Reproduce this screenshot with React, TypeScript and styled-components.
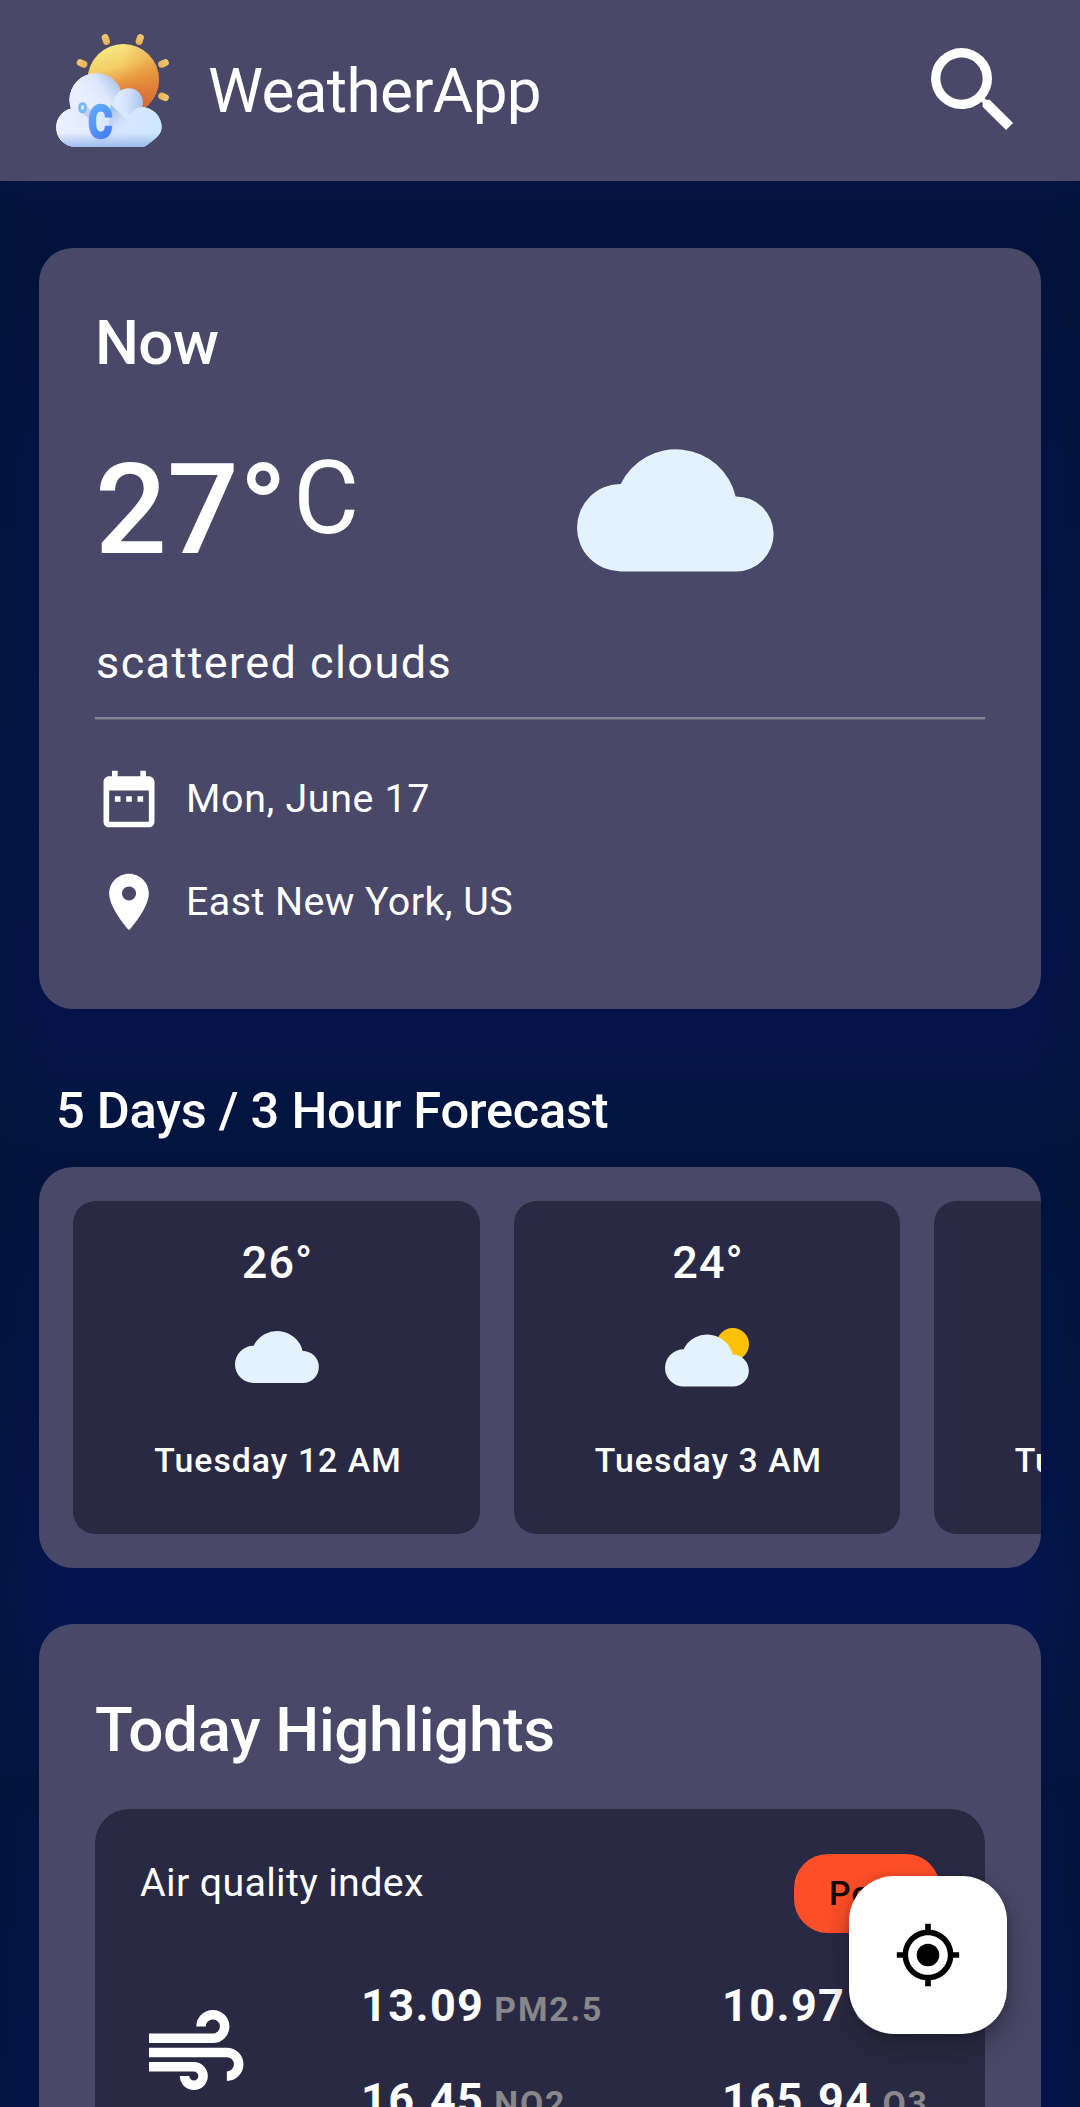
import React from "react";
import styled, { createGlobalStyle } from "styled-components";

const SURFACE = "#494868";
const SURFACE_DEEP = "#2a2944";
const MUTED = "#88878a";

const GlobalStyle = createGlobalStyle`
  *, *::before, *::after { box-sizing: border-box; }
  html, body { margin: 0; padding: 0; background: #01133c; }
  body { font-family: Roboto, "Noto Sans", sans-serif; color: #fff; overflow: hidden; }
  svg { display: block; flex: none; overflow: visible; }
`;

const Screen = styled.div`
  display: flex;
  flex-direction: column;
  width: 1080px;
  height: 2107px;
  overflow: hidden;
  background:
    linear-gradient(
      to right,
      rgba(0, 20, 58, 0.6) 0,
      rgba(0, 20, 58, 0) 60px,
      rgba(0, 20, 58, 0) 1026px,
      rgba(0, 20, 58, 0.6) 1080px
    ),
    linear-gradient(
      to bottom,
      #041544 181px,
      #01123c 215px,
      #01123c 300px,
      #021345 460px,
      #031448 850px,
      #05134b 1010px,
      #041447 1055px,
      #021540 1115px,
      #01133d 1180px,
      #011340 1260px,
      #041348 1450px,
      #051550 1595px,
      #031548 1680px,
      #02143f 1790px,
      #021448 1940px,
      #02144a 2107px
    );
`;

const TopBar = styled.header`
  display: flex;
  align-items: center;
  flex: none;
  height: 181px;
  padding: 0 51px 0 56px;
  background: ${SURFACE};
`;

const AppName = styled.h1`
  flex: 1;
  margin: 0 0 0 39px;
  font-size: 62px;
  font-weight: 400;
  line-height: 80px;
  letter-spacing: -0.6px;
`;

const IconButton = styled.button`
  display: flex;
  padding: 0;
  border: 0;
  background: none;
  color: #fff;
`;

const Content = styled.main`
  display: flex;
  flex-direction: column;
  flex: none;
  padding: 67px 39px 0;
`;

const Card = styled.section`
  padding: 56px 56px 73px;
  border-radius: 34px;
  background: ${SURFACE};
`;

const CardTitle = styled.h2<{ $line: number; $tracking: number }>`
  margin: 0;
  font-size: 62px;
  font-weight: 500;
  line-height: ${(p) => p.$line}px;
  letter-spacing: ${(p) => p.$tracking}px;
`;

const CurrentRow = styled.div`
  display: grid;
  grid-template-columns: 1fr 1fr;
  align-items: center;
  height: 239px;
  margin-top: 8px;
`;

const Temperature = styled.div`
  display: flex;
  align-items: flex-start;
  gap: 6px;
`;

const Degrees = styled.span`
  font-size: 126.6px;
  font-weight: 500;
  line-height: 148px;
`;

const Unit = styled.span`
  font-size: 101.2px;
  line-height: 126px;
`;

const CurrentIcon = styled.div`
  padding-left: 37px;
`;

const Description = styled.p`
  margin: 0;
  padding-left: 1px;
  font-size: 45px;
  line-height: 67px;
  letter-spacing: 1.42px;
`;

const Divider = styled.hr`
  height: 3px;
  margin: 21px 0 44px;
  border: 0;
  border-bottom: 1px solid #62616f;
  background: #858490;
`;

const MetaList = styled.div`
  display: flex;
  flex-direction: column;
  gap: 34px;
`;

const MetaRow = styled.div<{ $tracking: number }>`
  display: flex;
  align-items: center;
  gap: 23px;
  height: 69px;
  font-size: 39.4px;
  letter-spacing: ${(p) => p.$tracking}px;
`;

const SectionHeading = styled.h2`
  margin: 67px 0 21px;
  padding-left: 17px;
  font-size: 50.6px;
  font-weight: 500;
  line-height: 70px;
  letter-spacing: -0.26px;
`;

const ForecastStrip = styled.section`
  display: flex;
  gap: 34px;
  height: 401px;
  padding: 34px;
  overflow: hidden;
  border-radius: 34px;
  background: ${SURFACE};
`;

const ForecastCard = styled.article<{ $width: number }>`
  display: flex;
  flex-direction: column;
  align-items: center;
  flex: 0 0 ${(p) => p.$width}px;
  padding-top: 35px;
  border-radius: 22.5px;
  background: ${SURFACE_DEEP};
  font-weight: 500;
`;

const ForecastTemp = styled.div`
  padding-left: 2px;
  font-size: 45px;
  line-height: 54px;
  letter-spacing: 1px;
`;

const ForecastIcon = styled.div`
  display: flex;
  align-items: center;
  height: 134px;
`;

const ForecastTime = styled.div`
  padding-left: 3px;
  font-size: 33.75px;
  line-height: 74px;
  letter-spacing: 1.05px;
  white-space: nowrap;
`;

const Highlights = styled(Card)`
  margin-top: 56px;
`;

const AirPanel = styled.div`
  margin-top: 29px;
  padding: 45px;
  border-radius: 34px;
  background: ${SURFACE_DEEP};
`;

const AirHeader = styled.div`
  display: flex;
  align-items: flex-start;
  justify-content: space-between;
`;

const AirLabel = styled.span`
  font-size: 39.4px;
  line-height: 58px;
  letter-spacing: 0.32px;
`;

const QualityBadge = styled.span`
  padding: 0 35px;
  border-radius: 34px;
  background: #ff4f28;
  color: #140400;
  font-size: 33.75px;
  font-weight: 500;
  line-height: 79px;
  letter-spacing: 1.1px;
`;

const AirBody = styled.div`
  display: flex;
  align-items: center;
  margin-top: 43px;
`;

const WindHolder = styled.div`
  flex: 0 0 221px;
  padding: 0 0 11px 9px;
`;

const Metrics = styled.div`
  display: grid;
  grid-template-columns: 361px 1fr;
  row-gap: 30px;
  flex: 1;
`;

const Metric = styled.div`
  display: flex;
  align-items: baseline;
  gap: 10px;
  line-height: 60px;
  font-weight: 700;
  white-space: nowrap;
`;

const MetricValue = styled.span`
  font-size: 45px;
  letter-spacing: 1.4px;
`;

const MetricName = styled.span`
  color: ${MUTED};
  font-size: 33.75px;
  letter-spacing: 1.8px;
`;

const LocateButton = styled.button`
  position: fixed;
  right: 73px;
  bottom: 73px;
  display: flex;
  align-items: center;
  justify-content: center;
  width: 158px;
  height: 158px;
  padding: 0;
  border: 0;
  border-radius: 45px;
  background: #fff;
  color: #000;
  box-shadow: 0 14px 28px rgba(20, 20, 24, 0.4), 0 2px 10px rgba(20, 20, 24, 0.2);
`;

function LogoIcon() {
  const rays: [number, number, number][] = [
    [197.5, 57.5, -18],
    [299.5, 57.5, 18],
    [126, 129.5, -66],
    [371, 129.5, 66],
    [371, 230, 114],
  ];
  return (
    <svg width="113" height="113" viewBox="48 41 339 340" aria-hidden="true">
      <defs>
        <linearGradient id="sun" gradientUnits="userSpaceOnUse" x1="195" y1="90" x2="250" y2="290">
          <stop offset="0" stopColor="#f6e47c" />
          <stop offset="0.28" stopColor="#f3cd68" />
          <stop offset="0.5" stopColor="#e99a40" />
          <stop offset="0.72" stopColor="#dc6a35" />
          <stop offset="1" stopColor="#bf3530" />
        </linearGradient>
        <linearGradient id="sunSide" x1="0.45" y1="0.3" x2="1" y2="0.45">
          <stop offset="0" stopColor="#e5903e" stopOpacity="0" />
          <stop offset="1" stopColor="#e5903e" stopOpacity="0.85" />
        </linearGradient>
        <linearGradient id="ray" x1="0" y1="0" x2="0" y2="1">
          <stop offset="0" stopColor="#f0c873" />
          <stop offset="1" stopColor="#e9b152" />
        </linearGradient>
        <linearGradient id="puff" gradientUnits="userSpaceOnUse" x1="150" y1="250" x2="232" y2="196">
          <stop offset="0" stopColor="#e8efff" />
          <stop offset="0.55" stopColor="#dde7fb" />
          <stop offset="1" stopColor="#b4c9ef" />
        </linearGradient>
        <linearGradient id="smallPuff" gradientUnits="userSpaceOnUse" x1="222" y1="240" x2="310" y2="246">
          <stop offset="0" stopColor="#e2edff" />
          <stop offset="0.45" stopColor="#d3e2fb" />
          <stop offset="1" stopColor="#a6c1ee" />
        </linearGradient>
        <linearGradient id="base" gradientUnits="userSpaceOnUse" x1="60" y1="290" x2="360" y2="320">
          <stop offset="0" stopColor="#eaf1ff" />
          <stop offset="0.6" stopColor="#d8e6ff" />
          <stop offset="1" stopColor="#cde8ff" />
        </linearGradient>
        <linearGradient id="baseShade" gradientUnits="userSpaceOnUse" x1="0" y1="338" x2="0" y2="381">
          <stop offset="0" stopColor="#8fb0e6" stopOpacity="0" />
          <stop offset="1" stopColor="#8fb0e6" stopOpacity="0.8" />
        </linearGradient>
        <linearGradient id="longShade" gradientUnits="userSpaceOnUse" x1="200" y1="280" x2="250" y2="330">
          <stop offset="0" stopColor="#8ea9dc" stopOpacity="0.7" />
          <stop offset="1" stopColor="#c5d6f5" stopOpacity="0" />
        </linearGradient>
        <linearGradient id="letter" gradientUnits="userSpaceOnUse" x1="10" y1="-100" x2="85" y2="0">
          <stop offset="0" stopColor="#62b0fa" />
          <stop offset="1" stopColor="#457af2" />
        </linearGradient>
      </defs>
      {rays.map(([x, y, angle]) => (
        <rect
          key={`${x}-${y}`}
          x={x - 10.5}
          y={y - 16.5}
          width="21"
          height="33"
          rx="10.5"
          fill="url(#ray)"
          transform={`rotate(${angle} ${x} ${y})`}
        />
      ))}
      <circle cx="250" cy="178.5" r="107.5" fill="url(#sun)" />
      <circle cx="250" cy="178.5" r="107.5" fill="url(#sunSide)" opacity="0.7" />
      <circle cx="168" cy="239" r="80" fill="url(#puff)" />
      <path
        d="M107 381A59 59 0 0 1 92 265Q140 215 205 232L232 262Q262 278 278 267Q291 261 305 261A60 60 0 0 1 365 322C365 340 350 353 338 362L318 377Q312 381 304 381Z"
        fill="url(#base)"
      />
      <circle cx="168" cy="239" r="80" fill="url(#puff)" />
      <circle cx="266" cy="247" r="43" fill="url(#smallPuff)" />
      <path
        d="M107 381A59 59 0 1 1 120 264.500Q180 300 232 262L270 282Q286 261 305 261A60 60 0 0 1 365 322C365 340 350 353 338 362L318 377Q312 381 304 381Z"
        fill="url(#base)"
      />
      <path d="M212 253L270 308L262 345L200 378L182 378L160 352L205 330Z" fill="url(#longShade)" />
      <path
        d="M51 338H361C354 349 346 356 338 362L318 377Q312 381 304 381H107Q66 379 51 338Z"
        fill="url(#baseShade)"
      />
      <path d="M136 255L154 272V300L120 275Z" fill="#a9c0e9" opacity="0.6" />
      <rect x="119" y="251" width="17" height="24" rx="8" fill="none" stroke="#74bbf6" strokeWidth="9" />
      <text
        transform="translate(143.500 354) scale(0.8 1)"
        fontFamily="Roboto, sans-serif"
        fontWeight="700"
        fontSize="139"
        fill="url(#letter)"
        stroke="url(#letter)"
        strokeWidth="7"
        strokeLinejoin="round"
      >
        C
      </text>
    </svg>
  );
}

function SearchIcon() {
  return (
    <svg width="112.5" height="112.5" viewBox="0 0 24 24" fill="currentColor" aria-hidden="true">
      <path d="M15.5 14h-.79l-.28-.27A6.471 6.471 0 0 0 16 9.5 6.5 6.5 0 1 0 9.5 16c1.61 0 3.09-.59 4.23-1.57l.27.28v.79l5 4.99L20.49 19l-4.99-5zm-6 0C7.01 14 5 11.99 5 9.5S7.01 5 9.5 5 14 7.01 14 9.5 11.99 14 9.5 14z" />
    </svg>
  );
}

function CalendarIcon() {
  return (
    <svg width="68" height="68" viewBox="0 0 24 24" fill="currentColor" aria-hidden="true">
      <path d="M9 11H7v2h2v-2zm4 0h-2v2h2v-2zm4 0h-2v2h2v-2zm2-7h-1V2h-2v2H8V2H6v2H5c-1.11 0-1.99.9-1.99 2L3 20c0 1.1.89 2 2 2h14c1.1 0 2-.9 2-2V6c0-1.1-.9-2-2-2zm0 16H5V9h14v11z" />
    </svg>
  );
}

function PinIcon() {
  return (
    <svg width="68" height="68" viewBox="0 0 24 24" fill="currentColor" aria-hidden="true">
      <path d="M12 2C8.13 2 5 5.13 5 9c0 5.25 7 13 7 13s7-7.75 7-13c0-3.87-3.13-7-7-7zm0 9.5a2.5 2.5 0 0 1 0-5 2.5 2.5 0 0 1 0 5z" />
    </svg>
  );
}

function LocateIcon() {
  return (
    <svg width="68" height="68" viewBox="0 0 24 24" fill="currentColor" aria-hidden="true">
      <path d="M12 8c-2.21 0-4 1.79-4 4s1.79 4 4 4 4-1.79 4-4-1.79-4-4-4zm8.94 3A8.994 8.994 0 0 0 13 3.06V1h-2v2.06A8.994 8.994 0 0 0 3.06 11H1v2h2.06A8.994 8.994 0 0 0 11 20.94V23h2v-2.06A8.994 8.994 0 0 0 20.94 13H23v-2h-2.06zM12 19c-3.87 0-7-3.13-7-7s3.13-7 7-7 7 3.13 7 7-3.13 7-7 7z" />
    </svg>
  );
}

function CloudIcon({ width, sun = false }: { width: number; sun?: boolean }) {
  const top = sun ? -13 : 0;
  const viewHeight = 124.4 - top;
  return (
    <svg
      width={width}
      height={(width * viewHeight) / 197}
      viewBox={`0 ${top} 197 ${viewHeight}`}
      aria-hidden="true"
    >
      {sun && <circle cx="159" cy="25" r="38" fill="#ffc107" />}
      <path
        d="M43.7 124.4A43.7 43.7 0 0 1 43.7 37A61.4 61.4 0 0 1 158.7 49.4A37.5 37.5 0 0 1 159.5 124.4Z"
        fill="#e3f2fd"
      />
    </svg>
  );
}

function WindIcon() {
  return (
    <svg
      width="94.7"
      height="80"
      viewBox="28 27 284 240"
      fill="none"
      stroke="currentColor"
      strokeWidth="28.5"
      aria-hidden="true"
    >
      <path d="M28 112H219.5A35.5 35.5 0 1 0 184 76.5" />
      <path d="M28 154.5H261.5A35.5 35.5 0 0 1 261.5 225.5" />
      <path d="M28 197.5H162.5A27.7 27.7 0 1 1 134.8 225.2" />
    </svg>
  );
}

const forecast = [
  { temp: "26°", time: "Tuesday 12 AM", sun: false, width: 407 },
  { temp: "24°", time: "Tuesday 3 AM", sun: true, width: 386 },
  { temp: "22°", time: "Tuesday 6 AM", sun: true, width: 386 },
];

const pollutants = [
  { name: "PM2.5", value: "13.09" },
  { name: "SO2", value: "10.97" },
  { name: "NO2", value: "16.45" },
  { name: "O3", value: "165.94" },
];

export default function App() {
  return (
    <>
      <GlobalStyle />
      <Screen>
        <TopBar>
          <LogoIcon />
          <AppName>WeatherApp</AppName>
          <IconButton aria-label="Search">
            <SearchIcon />
          </IconButton>
        </TopBar>

        <Content>
          <Card>
            <CardTitle $line={78} $tracking={-0.64}>
              Now
            </CardTitle>
            <CurrentRow>
              <Temperature>
                <Degrees>27°</Degrees>
                <Unit>C</Unit>
              </Temperature>
              <CurrentIcon>
                <CloudIcon width={197} />
              </CurrentIcon>
            </CurrentRow>
            <Description>scattered clouds</Description>
            <Divider />
            <MetaList>
              <MetaRow $tracking={0.65}>
                <CalendarIcon />
                <span>Mon, June 17</span>
              </MetaRow>
              <MetaRow $tracking={0.42}>
                <PinIcon />
                <span>East New York, US</span>
              </MetaRow>
            </MetaList>
          </Card>

          <SectionHeading>5 Days / 3 Hour Forecast</SectionHeading>
          <ForecastStrip>
            {forecast.map((slot) => (
              <ForecastCard key={slot.time} $width={slot.width}>
                <ForecastTemp>{slot.temp}</ForecastTemp>
                <ForecastIcon>
                  <CloudIcon width={84} sun={slot.sun} />
                </ForecastIcon>
                <ForecastTime>{slot.time}</ForecastTime>
              </ForecastCard>
            ))}
          </ForecastStrip>

          <Highlights>
            <CardTitle $line={100} $tracking={-0.36}>
              Today Highlights
            </CardTitle>
            <AirPanel>
              <AirHeader>
                <AirLabel>Air quality index</AirLabel>
                <QualityBadge>Poor</QualityBadge>
              </AirHeader>
              <AirBody>
                <WindHolder>
                  <WindIcon />
                </WindHolder>
                <Metrics>
                  {pollutants.map((p) => (
                    <Metric key={p.name}>
                      <MetricValue>{p.value}</MetricValue>
                      <MetricName>{p.name}</MetricName>
                    </Metric>
                  ))}
                </Metrics>
              </AirBody>
            </AirPanel>
          </Highlights>
        </Content>

        <LocateButton aria-label="Use current location">
          <LocateIcon />
        </LocateButton>
      </Screen>
    </>
  );
}
